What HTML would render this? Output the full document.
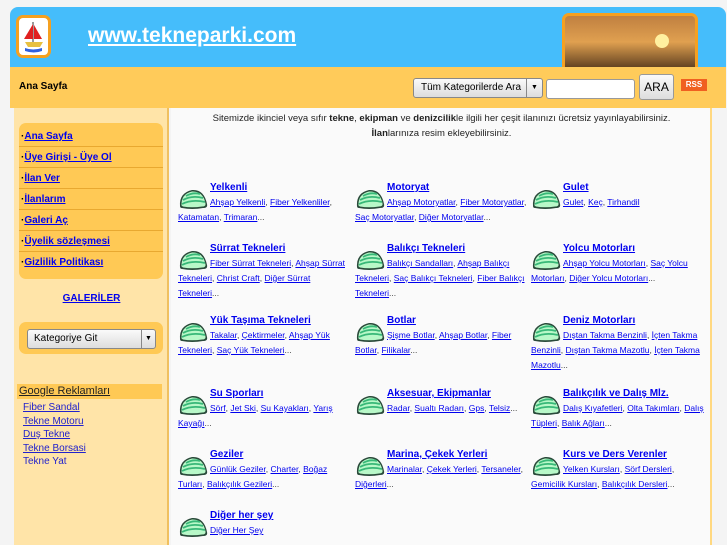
<!DOCTYPE html>
<html><head><meta charset="utf-8"><style>
*{margin:0;padding:0;box-sizing:border-box}
body{width:727px;height:545px;overflow:hidden;background:#f4f4f4;font-family:"Liberation Sans",sans-serif;font-size:9.5px;position:relative}
a{color:#0000ee;text-decoration:underline}
.abs{position:absolute}
#hdr{left:10px;top:7px;width:716px;height:61px;background:#45bdfb;border-radius:8px 8px 0 0}
#bar{left:10px;top:67px;width:716px;height:41px;background:#ffcb5a}
#side{left:14px;top:108px;width:155px;height:437px;background:#ffe4a8;border-right:2px solid #f0c060}
#main{left:171px;top:108px;width:541px;height:437px;background:#fafafa;border-right:2px solid #ffd880}
.menu{left:19px;top:123px;width:144px;height:156px;background:#ffc955;border-radius:7px;padding-top:3px}
.menu div{height:21px;line-height:22px;border-bottom:1px solid #e8a830;padding-left:2px;font-weight:bold;font-size:10px}
.cell{position:absolute;width:174px;line-height:15px;font-size:8.5px;color:#333}
.cell b a{font-size:10px}
.cell .t{padding-left:32px;display:block}
.ic{position:absolute;left:0;top:7px;width:31px;height:23px}
</style></head><body>
<div id="hdr" class="abs"></div>
<div class="abs" style="left:16px;top:15px;width:35px;height:43px;background:#fff;border:3px solid #f5a020;border-radius:7px">
<svg width="29" height="37" viewBox="0 0 29 37"><path d="M14 4v20" stroke="#333" stroke-width="1"/><path d="M14 6L5 21h9z" fill="#e02020"/><path d="M15 7l8 14h-8z" fill="#e02020"/><path d="M6 24h18l-3 5H9z" fill="#e8c040"/><path d="M6 30q8 3 17 0v3q-8 3-17 0z" fill="#3060e0"/></svg></div>
<div class="abs" style="left:88px;top:24px;color:#fff;font-size:21px;font-weight:bold;text-decoration:underline">www.tekneparki.com</div>
<div class="abs" style="left:562px;top:13px;width:136px;height:55px;border:3px solid #f5a020;border-bottom:none;border-radius:7px 7px 0 0;background:linear-gradient(#c08040,#e0a050 50%,#604020)">
<div style="position:absolute;left:90px;top:18px;width:14px;height:14px;border-radius:50%;background:#fff0a0"></div></div>
<div id="bar" class="abs"></div>
<div class="abs" style="left:19px;top:81px;font-weight:bold;font-size:10px">Ana Sayfa</div>
<div class="abs" style="left:413px;top:78px;width:130px;height:20px;border:1px solid #888;border-radius:3px;background:linear-gradient(#fafafa,#ddd);font-size:10px;line-height:18px;padding-left:7px">Tüm Kategorilerde Ara<span style="position:absolute;right:0;top:0;width:16px;height:18px;border-left:1px solid #888;text-align:center;font-size:7px">▼</span></div>
<div class="abs" style="left:546px;top:79px;width:89px;height:20px;border:1px solid #999;border-radius:3px;background:#fff"></div>
<div class="abs" style="left:639px;top:74px;width:35px;height:26px;border:1px solid #999;border-radius:3px;background:linear-gradient(#fafafa,#ddd);font-size:12px;line-height:24px;text-align:center">ARA</div>
<div class="abs" style="left:681px;top:79px;width:26px;height:12px;background:#f06020;color:#fff;font-size:8px;font-weight:bold;text-align:center;line-height:12px">RSS</div>
<div id="side" class="abs"></div>
<div id="main" class="abs"></div>
<div class="abs menu">
<div>·<a>Ana Sayfa</a></div><div>·<a>Üye Girişi - Üye Ol</a></div><div>·<a>İlan Ver</a></div><div>·<a>İlanlarım</a></div><div>·<a>Galeri Aç</a></div><div>·<a>Üyelik sözleşmesi</a></div><div style="border:none">·<a>Gizlilik Politikası</a></div></div>
<div class="abs" style="left:14px;width:155px;top:293px;text-align:center;font-weight:bold;font-size:10px"><a>GALERİLER</a></div>
<div class="abs" style="left:19px;top:322px;width:144px;height:32px;background:#ffc955;border-radius:7px"></div>
<div class="abs" style="left:27px;top:329px;width:129px;height:20px;border:1px solid #888;border-radius:3px;background:linear-gradient(#fafafa,#ddd);font-size:10px;line-height:18px;padding-left:6px">Kategoriye Git<span style="position:absolute;right:0;top:0;width:14px;height:18px;border-left:1px solid #888;text-align:center;font-size:7px">▼</span></div>
<div class="abs" style="left:17px;top:384px;width:145px;height:15px;background:#ffc955;font-size:11px;line-height:15px;padding-left:2px;color:#222;text-decoration:underline">Google Reklamları</div>
<div class="abs" style="left:23px;top:401px;font-size:10px;line-height:13.6px;color:#2222cc"><a style="color:#2222cc">Fiber Sandal</a><br><a style="color:#2222cc">Tekne Motoru</a><br><a style="color:#2222cc">Duş Tekne</a><br><a style="color:#2222cc">Tekne Borsasi</a><br>Tekne Yat</div>
<div class="abs" style="left:171px;top:111px;width:541px;text-align:center;font-size:9.5px;line-height:15px;color:#222">Sitemizde ikinciel veya sıfır <b>tekne</b>, <b>ekipman</b> ve <b>denizcilik</b>le ilgili her çeşit ilanınızı ücretsiz yayınlayabilirsiniz.<br><b>İlan</b>larınıza resim ekleyebilirsiniz.</div>
<svg width="0" height="0" style="position:absolute"><defs><g id="sh"><path d="M2 19Q1 6 14 3Q26 2 29 17Q30 21 25 21Q14 23 4 21Q2 21 2 19z" fill="#2a4a3a"/><path d="M3.5 18.5Q3 7 14 4.5Q25 4 27.5 16.5Q28 19.5 24 19.5Q14 21 5 19.5z" fill="#b8f8c8"/><path d="M4 17Q14 12 27 15M5 13Q14 8 25 11M8 9Q15 5 22 7" stroke="#38b878" stroke-width="1.8" fill="none"/></g></defs></svg>
<div id="grid"></div>
<script>
var d=[
[178,180,"Yelkenli",'<a>Ahşap Yelkenli</a>, <a>Fiber Yelkenliler</a>, <a>Katamatan</a>, <a>Trimaran</a>...'],
[355,180,"Motoryat",'<a>Ahşap Motoryatlar</a>, <a>Fiber Motoryatlar</a>, <a>Saç Motoryatlar</a>, <a>Diğer Motoryatlar</a>...'],
[531,180,"Gulet",'<a>Gulet</a>, <a>Keç</a>, <a>Tirhandil</a>'],
[178,241,"Sürrat Tekneleri",'<a>Fiber Sürrat Tekneleri</a>, <a>Ahşap Sürrat Tekneleri</a>, <a>Christ Craft</a>, <a>Diğer Sürrat Tekneleri</a>...'],
[355,241,"Balıkçı Tekneleri",'<a>Balıkçı Sandalları</a>, <a>Ahşap Balıkçı Tekneleri</a>, <a>Saç Balıkçı Tekneleri</a>, <a>Fiber Balıkçı Tekneleri</a>...'],
[531,241,"Yolcu Motorları",'<a>Ahşap Yolcu Motorları</a>, <a>Saç Yolcu Motorları</a>, <a>Diğer Yolcu Motorları</a>...'],
[178,313,"Yük Taşıma Tekneleri",'<a>Takalar</a>, <a>Çektirmeler</a>, <a>Ahşap Yük Tekneleri</a>, <a>Saç Yük Tekneleri</a>...'],
[355,313,"Botlar",'<a>Şişme Botlar</a>, <a>Ahşap Botlar</a>, <a>Fiber Botlar</a>, <a>Filikalar</a>...'],
[531,313,"Deniz Motorları",'<a>Dıştan Takma Benzinli</a>, <a>İçten Takma Benzinli</a>, <a>Dıştan Takma Mazotlu</a>, <a>İçten Takma Mazotlu</a>...'],
[178,386,"Su Sporları",'<a>Sörf</a>, <a>Jet Ski</a>, <a>Su Kayakları</a>, <a>Yarış Kayağı</a>...'],
[355,386,"Aksesuar, Ekipmanlar",'<a>Radar</a>, <a>Sualtı Radarı</a>, <a>Gps</a>, <a>Telsiz</a>...'],
[531,386,"Balıkçılık ve Dalış Mlz.",'<a>Dalış Kıyafetleri</a>, <a>Olta Takımları</a>, <a>Dalış Tüpleri</a>, <a>Balık Ağları</a>...'],
[178,447,"Geziler",'<a>Günlük Geziler</a>, <a>Charter</a>, <a>Boğaz Turları</a>, <a>Balıkçılık Gezileri</a>...'],
[355,447,"Marina, Çekek Yerleri",'<a>Marinalar</a>, <a>Çekek Yerleri</a>, <a>Tersaneler</a>, <a>Diğerleri</a>...'],
[531,447,"Kurs ve Ders Verenler",'<a>Yelken Kursları</a>, <a>Sörf Dersleri</a>, <a>Gemicilik Kursları</a>, <a>Balıkçılık Dersleri</a>...'],
[178,508,"Diğer her şey",'<a>Diğer Her Şey</a>']];
var h='';d.forEach(function(c){h+='<div class="cell" style="left:'+c[0]+'px;top:'+c[1]+'px"><svg class="ic" viewBox="0 0 31 23"><use href="#sh"/></svg><b class="t"><a>'+c[2]+'</a></b><div style="text-indent:32px">'+c[3]+'</div></div>';});
document.getElementById('grid').innerHTML=h;
</script>
</body></html>
